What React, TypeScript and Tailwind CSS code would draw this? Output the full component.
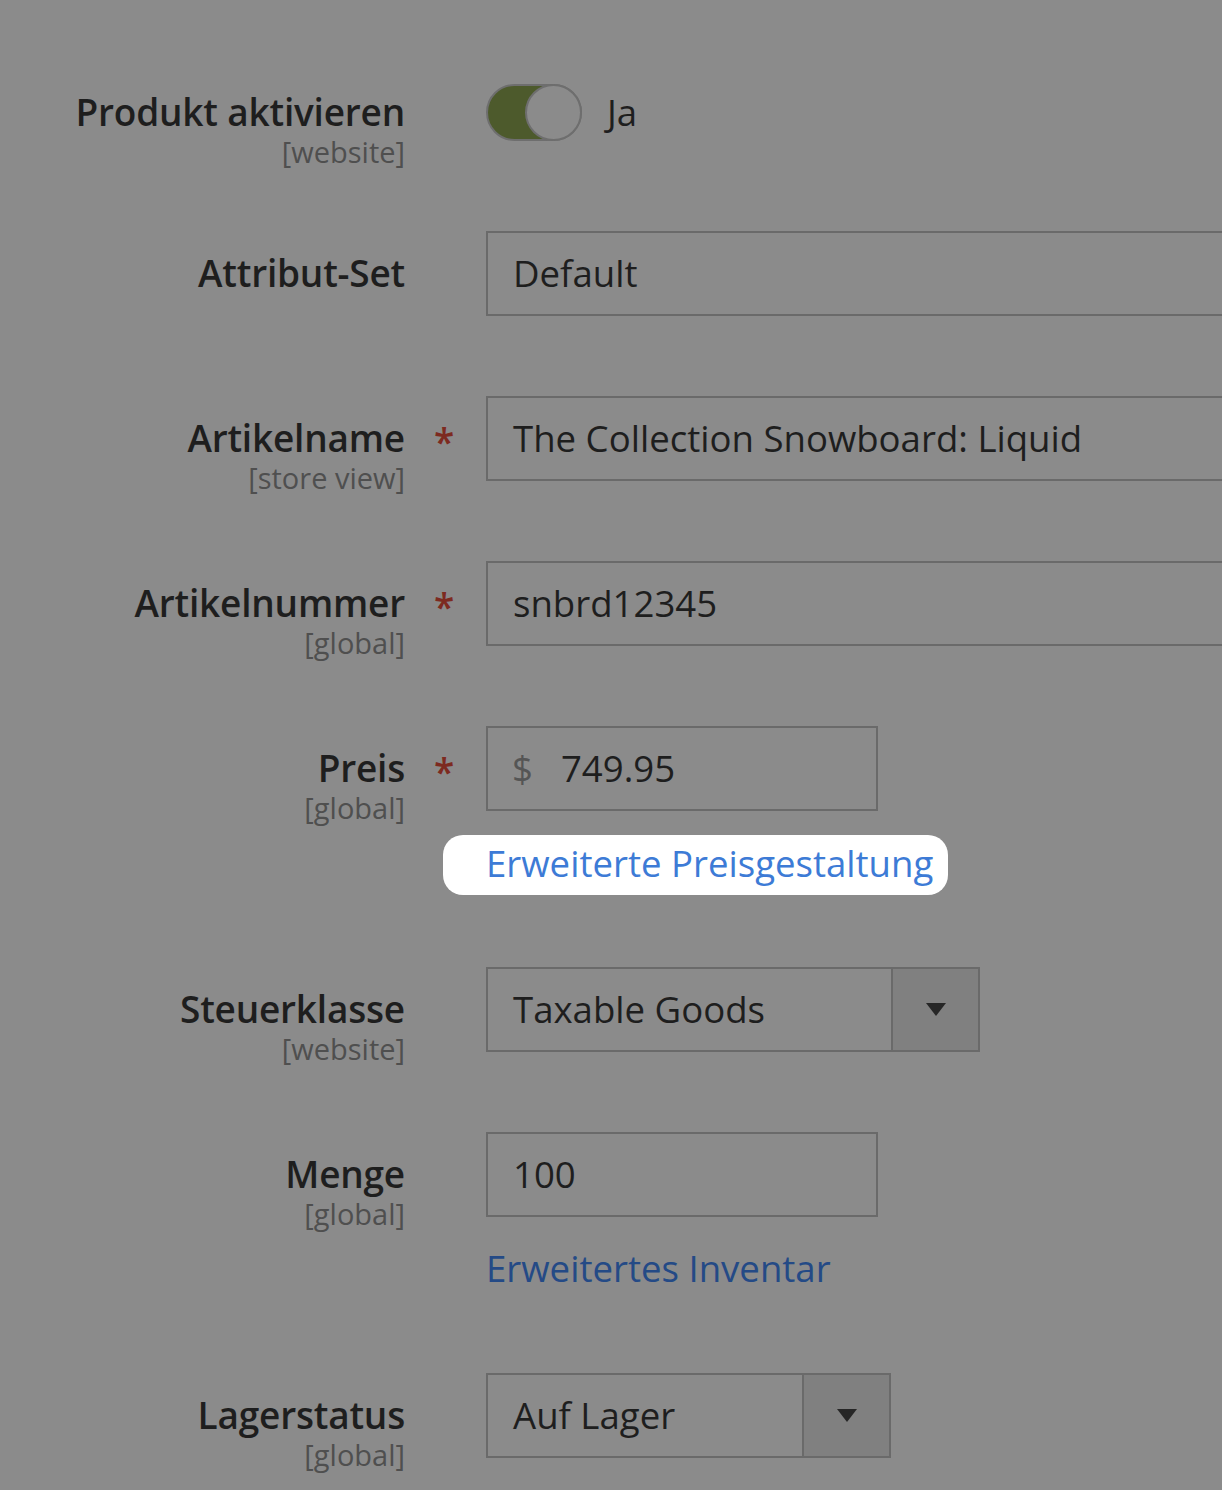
import React from "react";

const font = { fontFamily: '"Open Sans", "Liberation Sans", sans-serif' };

function Label({ main, sub, required }: { main: string; sub?: string; required?: boolean }) {
  return (
    <div className="flex shrink-0 h-[85px]">
      <div className="w-[405px] shrink-0 text-right pt-[19px]">
        <div className="text-[37px] leading-[46px] font-semibold text-[#1e1e1e] tracking-[-0.2px] whitespace-nowrap">{main}</div>
        {sub && <div className="text-[29px] leading-[34px] text-[#4f4f4f] whitespace-nowrap">{sub}</div>}
      </div>
      <div className="w-[81px] shrink-0 pl-[29px] pt-[23px]">
        {required && <span className="text-[37px] leading-[46px] font-semibold text-[#7d2a20]">*</span>}
      </div>
    </div>
  );
}

function Input({ value, width, prefix }: { value: string; width?: string; prefix?: string }) {
  return (
    <div
      className={`h-[85px] border-2 border-[#6a6a6a] flex items-center pl-[25px] text-[36.6px] text-[#1e1e1e] whitespace-nowrap ${width ?? "flex-1 -mr-[40px]"}`}
    >
      {prefix && <span className="text-[#555555] mr-[28px] -ml-[1px]">{prefix}</span>}
      <span>{value}</span>
    </div>
  );
}

function Select({ value, width, btnLeft }: { value: string; width: string; btnLeft: string }) {
  return (
    <div className={`h-[85px] border-2 border-[#6a6a6a] flex ${width}`}>
      <div className={`${btnLeft} flex items-center pl-[25px] text-[36.6px] text-[#1e1e1e] border-r-2 border-[#6a6a6a] whitespace-nowrap`}>
        {value}
      </div>
      <div className="flex-1 bg-[#808080] flex items-center justify-center">
        <svg width="20" height="14" viewBox="0 0 20 14">
          <path d="M0 0 L20 0 L10 13 Z" fill="#262626" />
        </svg>
      </div>
    </div>
  );
}

export default function App() {
  return (
    <div className="w-[1222px] h-[1490px] bg-[#8b8b8b] overflow-hidden pt-[66px]" style={font}>
      {/* Row 1 */}
      <div className="flex h-[85px] mb-[80px]">
        <div className="w-[405px] shrink-0 text-right pt-[23px]">
          <div className="text-[37px] leading-[46px] font-semibold text-[#1e1e1e] tracking-[-0.2px] whitespace-nowrap">Produkt aktivieren</div>
          <div className="text-[29px] leading-[34px] text-[#4f4f4f]">[website]</div>
        </div>
        <div className="w-[81px] shrink-0" />
        <div className="flex items-center pt-[8px]">
          <div className="w-[96px] h-[57px] rounded-full bg-[#4d5a2c] border-2 border-[#6e6e6e] relative">
            <div className="absolute right-[-2px] top-[-2px] w-[57px] h-[57px] rounded-full bg-[#8b8b8b] border-2 border-[#6e6e6e]" />
          </div>
          <span className="ml-[25px] text-[36.6px] text-[#1e1e1e]">Ja</span>
        </div>
      </div>

      {/* Attribut-Set */}
      <div className="flex mb-[80px]">
        <Label main="Attribut-Set" />
        <Input value="Default" />
      </div>

      {/* Artikelname */}
      <div className="flex mb-[80px]">
        <Label main="Artikelname" sub="[store view]" required />
        <Input value="The Collection Snowboard: Liquid" />
      </div>

      {/* Artikelnummer */}
      <div className="flex mb-[80px]">
        <Label main="Artikelnummer" sub="[global]" required />
        <Input value="snbrd12345" />
      </div>

      {/* Preis */}
      <div className="flex mb-[80px]">
        <Label main="Preis" sub="[global]" required />
        <div className="flex flex-col">
          <Input value="749.95" prefix="$" width="w-[392px]" />
          <div className="h-[76px] pt-[24px]">
            <div className="-ml-[43px] h-[60px] w-fit flex items-center pl-[43px] pr-[15px] pb-[4px] bg-white rounded-[20px]">
              <span className="text-[36.6px] text-[#3d7bd6] leading-[50px] whitespace-nowrap">Erweiterte Preisgestaltung</span>
            </div>
          </div>
        </div>
      </div>

      {/* Steuerklasse */}
      <div className="flex mb-[80px]">
        <Label main="Steuerklasse" sub="[website]" />
        <Select value="Taxable Goods" width="w-[494px]" btnLeft="w-[405px]" />
      </div>

      {/* Menge */}
      <div className="flex mb-[80px]">
        <Label main="Menge" sub="[global]" />
        <div className="flex flex-col">
          <Input value="100" width="w-[392px]" />
          <div className="h-[76px] pt-[26px]">
            <span className="text-[36.6px] text-[#244a86] leading-[50px] whitespace-nowrap">Erweitertes Inventar</span>
          </div>
        </div>
      </div>

      {/* Lagerstatus */}
      <div className="flex">
        <Label main="Lagerstatus" sub="[global]" />
        <Select value="Auf Lager" width="w-[405px]" btnLeft="w-[316px]" />
      </div>
    </div>
  );
}
